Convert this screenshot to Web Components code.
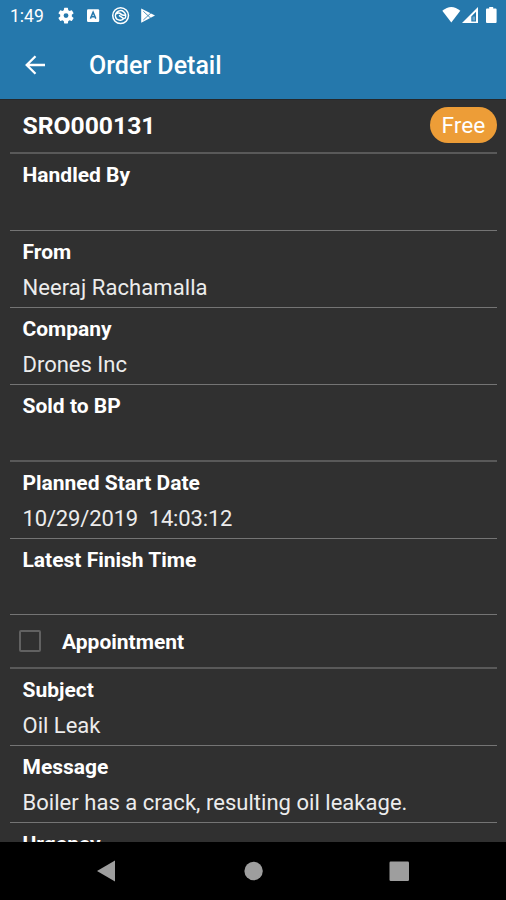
<!DOCTYPE html>
<html lang="en">
<head>
<meta charset="utf-8">
<title>Order Detail</title>
<style>
html,body{margin:0;height:100%;background:#000}
body{font-family:Roboto,"Liberation Sans",sans-serif;color:#fff;overflow:hidden}
</style>
</head>
<body>
<order-screen></order-screen>
<script>
function define(name, html) {
  const t = document.createElement('template');
  t.innerHTML = html;
  customElements.define(name, class extends HTMLElement {
    constructor() {
      super();
      this.attachShadow({ mode: 'open' }).append(t.content.cloneNode(true));
    }
  });
}

define('status-bar', `
<style>
:host{display:flex;height:32px;box-sizing:border-box;padding:0 8px 0 10px;align-items:center;justify-content:space-between;background:#2578ac}
.time{font-size:17.5px;line-height:32px;width:34px;margin-right:13px;white-space:nowrap}
div{display:flex;align-items:center}
svg{display:block}
</style>
<div>
  <span class="time">1:49</span>
  <svg width="100" height="20" viewBox="57 6 100 20" fill="#fff">
    <g transform="translate(56.3 5.9) scale(.81)"><path d="M19.14 12.94c.04-.3.06-.61.06-.94s-.02-.64-.07-.94l2.03-1.58a.5.5 0 0 0 .12-.61l-1.92-3.32a.49.49 0 0 0-.59-.22l-2.39.96a7 7 0 0 0-1.62-.94l-.36-2.54a.48.48 0 0 0-.48-.41h-3.84a.47.47 0 0 0-.47.41l-.36 2.54c-.59.24-1.13.57-1.62.94l-2.39-.96a.47.47 0 0 0-.59.22L2.74 8.87a.47.47 0 0 0 .12.61l2.03 1.58c-.05.3-.09.63-.09.94s.02.64.07.94l-2.03 1.58a.5.5 0 0 0-.12.61l1.92 3.32c.12.22.37.29.59.22l2.39-.96c.5.38 1.03.7 1.62.94l.36 2.54c.05.24.24.41.48.41h3.84c.24 0 .44-.17.47-.41l.36-2.54a7 7 0 0 0 1.62-.94l2.39.96c.22.08.47 0 .59-.22l1.92-3.32a.47.47 0 0 0-.12-.61zM12 15a3 3 0 1 1 0-6 3 3 0 0 1 0 6"/></g>
    <rect x="87" y="9.2" width="12.2" height="12.8" rx="1.2"/>
    <path d="M90.4 18.6l2.7-6.4 2.7 6.4M91.4 16.8h3.4" fill="none" stroke="#2578ac" stroke-width="1.5"/>
    <circle cx="120.6" cy="15.6" r="7.9" fill="none" stroke="#fff" stroke-width="1.5"/>
    <path d="M116.8 19.2a5.1 5.1 0 1 1 8-.6M116.3 13.8c2-1.2 3.6-.9 4.7.3s2.3 1.500 4.600 1M116.800 19.200c2.500 1.600 5.500 1.200 7-.6l-4.800-3.200" fill="none" stroke="#fff" stroke-width="1.6"/>
    <path d="M141.2 8.4v14.4l13.8-7.2z"/>
    <path d="M143.3 11.3l7.6 7M143.3 20l7.6-7" stroke="#2578ac" stroke-width=".8" fill="none"/>
  </svg>
</div>
<svg width="58" height="20" viewBox="441 6 58 20" fill="#fff">
  <path d="M443.3 10.8Q452.3 3.2 461.3 10.8L452.3 22.4z"/>
  <path fill-rule="evenodd" d="M479 7v16h-16zM477 11.8l-4.700 4.800v4.800h4.700z"/>
  <path d="M473.5 16.5h2.600v4h-2.600z" opacity=".35"/>
  <path d="M490.2 7h4v1.600h2.400q1 0 1 1v12.400q0 1-1 1h-8.600q-1 0-1-1v-12.400q0-1 1-1h2.200z"/>
</svg>`);

define('app-bar', `
<style>
:host{display:flex;height:67px;box-sizing:border-box;padding-left:24px;align-items:center;background:#2578ac}
svg{display:block;margin:-1px 42px 0 0}
h1{margin:0;font-size:25px;font-weight:500;line-height:67px;white-space:nowrap}
</style>
<svg width="23" height="22" viewBox="0 0 23 22" fill="none" stroke="#fff" stroke-width="2.3"><path d="M21 11H3M11.5 2.2L2.7 11l8.800 8.800"/></svg>
<h1><slot></slot></h1>`);

define('order-head', `
<style>
:host{display:flex;height:55.1px;box-sizing:border-box;padding:0 0 1.600px 12.5px;align-items:center;justify-content:space-between;border-bottom:2px solid #595959}
.id{font-size:24.7px;line-height:28px;font-weight:700;white-space:nowrap;padding-top:1.500px}
.pill{background:#ed9d37;border-radius:19px;width:67px;height:36px;line-height:38px;text-align:center;font-size:22.7px}
</style>
<span class="id"><slot></slot></span><span class="pill"><slot name="status"></slot></span>`);

define('detail-field', `
<style>
:host{display:block;height:76.9px;box-sizing:border-box;padding:4.3px 0 0 12.5px;border-bottom:1px solid #747474}
:host([strong]){border-bottom:2px solid #595959}
.l,.v{height:35px;line-height:35px;white-space:pre}
.l{font-weight:700;font-size:21px}
.v{color:#ececec;font-size:22px;letter-spacing:var(--track,0)}
</style>
<div class="l"><slot name="label"></slot></div><div class="v"><slot></slot></div>`);

define('check-field', `
<style>
:host{display:flex;height:53.4px;box-sizing:border-box;padding:2px 0 0 9px;align-items:center;border-bottom:2px solid #595959;font-size:21px;font-weight:700}
.box{width:22px;height:22px;box-sizing:border-box;border:2px solid #616161;border-radius:2px;margin:-2px 21px 0 0}
</style>
<span class="box"></span><slot></slot>`);

define('nav-bar', `
<style>
:host{display:flex;height:58px;background:#000}
svg{display:block}
</style>
<svg width="506" height="58" viewBox="0 842 506 58" fill="#9e9e9e"><path d="M97 871l18-10.6v21.2z"/><circle cx="253.6" cy="871" r="9.2"/><rect x="389.5" y="861.5" width="19.5" height="19.5" rx="1.2"/></svg>`);

define('order-screen', `
<style>
:host{display:flex;flex-direction:column;width:506px;height:900px;background:#303030}
main{flex:1;min-height:0;overflow:hidden;padding:0 9px 0 10px;box-shadow:inset 0 1px #25282a}
nav-bar{flex:none}
</style>
<status-bar></status-bar>
<app-bar>Order Detail</app-bar>
<main>
  <order-head>SRO000131<span slot="status">Free</span></order-head>
  <detail-field><span slot="label">Handled By</span></detail-field>
  <detail-field style="--track:.08px"><span slot="label">From</span>Neeraj Rachamalla</detail-field>
  <detail-field><span slot="label">Company</span>Drones Inc</detail-field>
  <detail-field strong><span slot="label">Sold to BP</span></detail-field>
  <detail-field style="--track:-.15px"><span slot="label">Planned Start Date</span>10/29/2019  14:03:12</detail-field>
  <detail-field><span slot="label">Latest Finish Time</span></detail-field>
  <check-field>Appointment</check-field>
  <detail-field><span slot="label">Subject</span>Oil Leak</detail-field>
  <detail-field style="--track:.03px"><span slot="label">Message</span>Boiler has a crack, resulting oil leakage.</detail-field>
  <detail-field><span slot="label">Urgency</span></detail-field>
</main>
<nav-bar></nav-bar>`);
</script>
</body>
</html>
